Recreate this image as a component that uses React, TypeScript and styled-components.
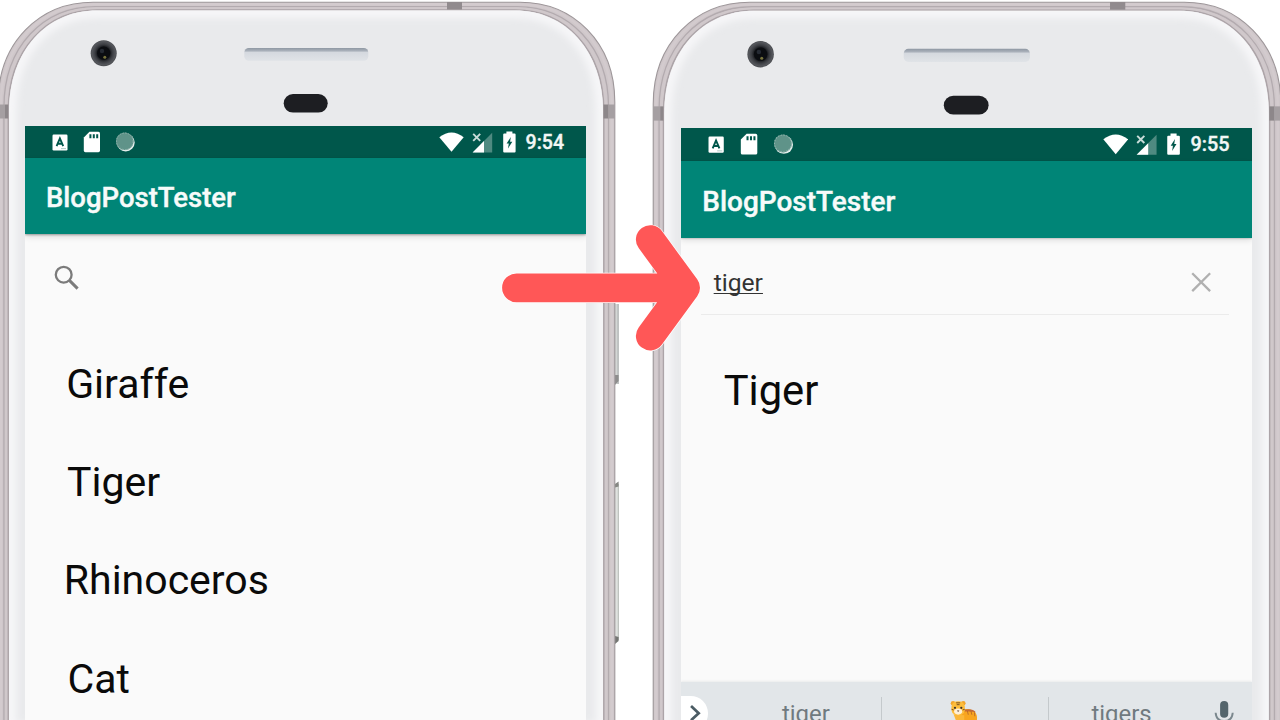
import React from 'react';
import styled, { createGlobalStyle } from 'styled-components';

const GlobalStyle = createGlobalStyle`
  *, *::before, *::after { box-sizing: border-box; }
  html, body { margin: 0; padding: 0; background: #ffffff; overflow: hidden; }
  body { font-family: Roboto, "Liberation Sans", sans-serif; }
`;

const Page = styled.main`
  position: relative;
  width: 1280px;
  height: 720px;
  overflow: hidden;
  background: #ffffff;
`;

const Stage = styled.div`
  display: flex;
  align-items: flex-start;
  gap: 29.4px;
  width: 1300px;
  margin-left: -4px;
`;

const Phone = styled.section<{ $scale: number }>`
  position: relative;
  flex: none;
  width: 626px;
  height: 720px;
  padding: 126px 36px 0 29px;
  zoom: ${(p) => p.$scale};
`;

const DeviceArt = styled.svg`
  position: absolute;
  top: 0;
  left: 0;
  width: 626px;
  height: 720px;
`;

const Screen = styled.div`
  position: relative;
  display: flex;
  flex-direction: column;
  height: 594px;
  background: #fafafa;
  overflow: hidden;
`;

const StatusBar = styled.div`
  flex: none;
  display: flex;
  align-items: center;
  justify-content: space-between;
  height: 32px;
  padding: 0 22px 0 26.7px;
  background: #00574b;
  color: #f2f7f6;
`;

const StatusGroup = styled.div<{ $gap: number }>`
  display: flex;
  align-items: center;
  gap: ${(p) => p.$gap}px;
`;

const Glyph = styled.svg<{ $w: number; $h: number }>`
  display: block;
  flex: none;
  width: ${(p) => p.$w}px;
  height: ${(p) => p.$h}px;
`;

const Clock = styled.span`
  font-size: 19.5px;
  font-weight: 500;
  line-height: 32px;
  padding-top: 1.6px;
  margin-left: 1px;
  -webkit-text-stroke: 0.35px #f2f7f6;
`;

const AppBar = styled.header`
  flex: none;
  position: relative;
  display: flex;
  align-items: center;
  height: 76.3px;
  padding: 4px 20px 0 21px;
  background: #008577;
  box-shadow: 0 1px 2px rgba(0, 0, 0, 0.32), 0 3px 6px rgba(0, 0, 0, 0.12);
`;

const AppTitle = styled.h1`
  margin: 0;
  font-size: 27.5px;
  font-weight: 500;
  line-height: 1;
  color: #f7fbfa;
  -webkit-text-stroke: 0.4px #f7fbfa;
`;

const SearchBar = styled.div<{ $active: boolean }>`
  flex: none;
  display: flex;
  align-items: center;
  justify-content: space-between;
  height: 75px;
  margin: 0 22.5px 0 19.7px;
  padding: ${(p) => (p.$active ? '12px 17px 0 12.5px' : '14px 0 0 9.5px')};
  border-bottom: 1px solid ${(p) => (p.$active ? '#ebebeb' : 'transparent')};
`;

const Query = styled.span`
  padding-top: 2px;
  font-size: 24.2px;
  line-height: 28px;
  color: #333333;
  text-decoration: underline;
  text-decoration-thickness: 1px;
  text-underline-offset: 2px;
  text-decoration-skip-ink: none;
`;

const AnimalList = styled.ul`
  flex: 1;
  min-height: 0;
  margin: 0;
  padding: 25.6px 0 0 36px;
  list-style: none;
  overflow: hidden;
`;

const Animal = styled.li<{ $indent: number }>`
  height: 98.3px;
  padding-left: ${(p) => p.$indent}px;
  font-size: 41px;
  line-height: 98.3px;
  color: #0a0a0a;
  white-space: nowrap;
`;

const Keyboard = styled.div`
  flex: none;
  display: grid;
  grid-template-columns: 49px 147.5px 164px 145px 55.5px;
  height: 50px;
  background: #e2e6e9;
  box-shadow: 0 -1px 2px rgba(120, 130, 135, 0.12);
`;

const KeyCell = styled.div`
  position: relative;
  display: flex;
  align-items: center;
  justify-content: center;
  height: 64px;
  font-size: 23.5px;
  color: #707a7f;

  & + &::before {
    content: '';
    position: absolute;
    left: 0;
    top: 15px;
    bottom: 0;
    width: 1px;
    background: #c4c9cc;
  }
`;

const ExpandKey = styled.div`
  display: flex;
  align-items: center;
  justify-content: center;
  width: 27px;
  height: 34px;
  margin-top: 14px;
  border-radius: 0 17px 17px 0;
  background: #ffffff;
`;

const MicKey = styled.div`
  display: flex;
  justify-content: center;
  padding: 17.5px 0 0 2px;
`;

const ArrowOverlay = styled.svg`
  position: absolute;
  left: 496px;
  top: 220px;
  width: 210px;
  height: 136px;
`;

/* Outline of the handset; t = 0 is the metal edge, t = 1 the edge of the glass. */
function outline(t: number): string {
  const mix = (a: number, b: number) => a + (b - a) * t;
  const m = (x: number) => mix(613, 612) - x;
  const right = mix(614.8, 603);
  const top = mix(2.2, 10.5);
  const bend = mix(520, 515);
  const c1 = mix(573, 565);
  const c2y = mix(42, 50);
  const sideY = mix(102, 112);
  return (
    `M${m(right)} 730V${sideY}C${m(right)} ${c2y} ${m(c1)} ${top} ${m(bend)} ${top}` +
    `H${bend}C${c1} ${top} ${right} ${c2y} ${right} ${sideY}V730Z`
  );
}

function Handset({ id }: { id: string }) {
  return (
    <DeviceArt viewBox="-4 0 626 720" aria-hidden="true">
      <defs>
        <clipPath id={`${id}-glass`}>
          <path d={outline(1)} />
        </clipPath>
        <filter id={`${id}-soft`} x="-10%" y="-10%" width="120%" height="120%">
          <feGaussianBlur stdDeviation="3.5" />
        </filter>
        <radialGradient id={`${id}-lens`}>
          <stop offset="0" stopColor="#0c0e12" />
          <stop offset="0.5" stopColor="#1b1d21" />
          <stop offset="0.68" stopColor="#3c3e43" />
          <stop offset="0.9" stopColor="#55575c" />
          <stop offset="1" stopColor="#4a4c50" />
        </radialGradient>
        <linearGradient id={`${id}-ear`} x1="0" y1="0" x2="0" y2="1">
          <stop offset="0" stopColor="#8f98a3" />
          <stop offset="0.22" stopColor="#a9b0ba" />
          <stop offset="0.35" stopColor="#d5d9df" />
          <stop offset="1" stopColor="#e0e3e7" />
        </linearGradient>
      </defs>

      <g>
        <rect x="614" y="304" width="4.5" height="80" fill="#d3d6d5" />
        <rect x="617.6" y="304" width="1" height="80" fill="#a5a8a7" />
        <path d="M615 375h3.6v6l-3.6 4z" fill="#8d8d8d" />
        <rect x="614" y="484" width="4.5" height="156" fill="#dfe2df" />
        <rect x="617.8" y="484" width="1" height="156" fill="#b3b8b3" />
        <path d="M615 484l3.6-2.5v5l-3.6 1z" fill="#858783" />
        <path d="M615 636l3.6 1v4l-3.6 3z" fill="#747673" />
      </g>

      <path d={outline(0)} fill="#cfc7ca" stroke="#9d9699" strokeWidth="1.1" />
      <path d={outline(0.25)} fill="none" stroke="#d3cbce" strokeWidth="2.4" />
      <path d={outline(0.53)} fill="none" stroke="#b3abaf" strokeWidth="1.3" />
      <path d={outline(0.74)} fill="none" stroke="#d0c8cb" strokeWidth="2" />
      <path d={outline(0.93)} fill="none" stroke="#aca4a8" strokeWidth="1.4" />

      <rect x="447" y="2" width="15" height="7.5" fill="#918b8e" />
      <rect x="603.5" y="104.5" width="5" height="14" fill="#8d878a" />
      <rect x="608.5" y="104.5" width="6.3" height="14" fill="#a59fa2" />
      <rect x="-2" y="104.5" width="7" height="14" fill="#a59fa2" />
      <rect x="5" y="104.5" width="3.2" height="14" fill="#8d878a" />

      <path d={outline(1)} fill="#e9eaec" />
      <g clipPath={`url(#${id}-glass)`}>
        <path
          d={outline(1)}
          fill="none"
          stroke="#f6f6f8"
          strokeWidth="15"
          filter={`url(#${id}-soft)`}
        />
      </g>

      <circle cx="103.7" cy="53.2" r="13" fill={`url(#${id}-lens)`} />
      <circle cx="103.7" cy="53.2" r="6.6" fill="#0b0d11" />
      <circle cx="102" cy="51" r="2.2" fill="#252a33" />
      <circle cx="104.8" cy="57.3" r="1.5" fill="#77733c" />

      <rect x="244.3" y="48" width="124" height="12.8" rx="4.5" fill={`url(#${id}-ear)`} />
      <rect x="283.7" y="94" width="44" height="18.6" rx="9.3" fill="#1d1e22" />
    </DeviceArt>
  );
}

function StatusIcons({ time }: { time: string }) {
  return (
    <StatusBar>
      <StatusGroup $gap={15.2}>
        <Glyph $w={16} $h={17} viewBox="0 0 16 17">
          <rect x="0.5" y="0.5" width="15" height="16" rx="1.2" fill="#fff" />
          <path
            d="M4.6 12.2L7.9 4.4L11.2 12.2M5.6 9.8h4.6"
            fill="none"
            stroke="#00574b"
            strokeWidth="1.9"
          />
          <path d="M9 14.6h5" stroke="#a9c6c1" strokeWidth="0.9" />
        </Glyph>
        <Glyph $w={18} $h={22} viewBox="0 0 18 22">
          <path
            d="M6.5 0.8H15.4Q17 0.8 17 2.4V19.6Q17 21.2 15.4 21.2H2.4Q0.8 21.2 0.8 19.6V6.5Z"
            fill="#fff"
          />
          <path d="M7.4 3.2v4M10.8 3.2v4M14.2 3.2v4" stroke="#00574b" strokeWidth="2" />
        </Glyph>
        <Glyph $w={20} $h={20} viewBox="0 0 20 20">
          <circle cx="9.7" cy="10.5" r="9" fill="#e4edeb" />
          <circle cx="8.8" cy="9.3" r="8.8" fill="#5f9389" />
          <circle
            cx="8.8"
            cy="9.3"
            r="8.3"
            fill="none"
            stroke="#8fb3ac"
            strokeWidth="1"
            strokeDasharray="1.6 1.2"
          />
        </Glyph>
      </StatusGroup>
      <StatusGroup $gap={7.8}>
        <Glyph $w={25} $h={20} viewBox="0 0 25 20">
          <path d="M0.3 5.2Q12.5 -4.4 24.7 5.2L12.5 19.8Z" fill="#fff" />
        </Glyph>
        <Glyph $w={21} $h={21} viewBox="0 0 21 21">
          <path d="M20.2 0.8V20.4H0.6Z" fill="#4f8a81" />
          <path d="M12 9V20.4H0.6Z" fill="#fff" />
          <path d="M0 0H9.5V9.5H0Z" fill="#00574b" />
          <path d="M1.2 1.8l7 7M8.2 1.8l-7 7" stroke="#c9dcd9" strokeWidth="1.9" />
        </Glyph>
        <Glyph $w={16} $h={22} viewBox="0 0 16 22">
          <path
            d="M5.4 0.6h6v2h2.2q1 0 1 1V20.4q0 1-1 1H3.2q-1 0-1-1V3.6q0-1 1-1H5.4Z"
            fill="#fff"
          />
          <path d="M9.8 6L5.6 12.6H7.8L7 17.6L11.3 10.7H9.1Z" fill="#00574b" />
        </Glyph>
        <Clock>{time}</Clock>
      </StatusGroup>
    </StatusBar>
  );
}

function SearchIcon() {
  return (
    <Glyph $w={26} $h={26} viewBox="0 0 26 26">
      <circle cx="9.7" cy="9.7" r="7.9" fill="none" stroke="#7b7b7b" strokeWidth="2.3" />
      <path d="M15.4 15.4L23.6 23.6" fill="none" stroke="#7b7b7b" strokeWidth="3" />
    </Glyph>
  );
}

function ClearIcon() {
  return (
    <Glyph $w={20} $h={20} viewBox="0 0 20 20">
      <path d="M1.2 1.2L18.8 18.8M18.8 1.2L1.2 18.8" stroke="#b0b0b0" strokeWidth="2.3" />
    </Glyph>
  );
}

function TigerEmoji() {
  return (
    <Glyph $w={28} $h={28} viewBox="0 0 28 28">
      <path d="M10 10Q18 7.5 23 10.5Q27 13 26.5 19V28H9Z" fill="#f8a51f" />
      <path d="M14 9.6Q22 7.8 25.5 12Q20 10.8 14 11.4Z" fill="#c56a35" />
      <path d="M17 10.5l1 4M20.5 10.5l1 4M24 12l0.4 4" stroke="#b8692a" strokeWidth="0.9" />
      <path d="M3.5 14Q5 18 9 28H14V15Z" fill="#fbb73a" />
      <circle cx="3" cy="3.2" r="2.3" fill="#f2a52b" />
      <circle cx="13" cy="3.2" r="2.3" fill="#f2a52b" />
      <path
        d="M1.5 5.8Q2.6 1.2 8 1.2Q13.4 1.2 14.5 5.8Q16 14.8 8 15.2Q0 14.8 1.5 5.8Z"
        fill="#fdbd3c"
      />
      <path d="M4.4 9.6Q8 7 11.6 9.6Q13.4 13.8 8 14.4Q2.6 13.8 4.4 9.6Z" fill="#fff0d8" />
      <path d="M6 2.8h4M6.6 4.6h2.8M1.6 9.2l2 .6M14.4 9.2l-2 .6" stroke="#6d4622" strokeWidth="0.9" />
      <circle cx="4.9" cy="7.7" r="1.1" fill="#3b3530" />
      <circle cx="11.1" cy="7.7" r="1.1" fill="#3b3530" />
      <path d="M6.8 10.2h2.4L8 11.8Z" fill="#5b4237" />
    </Glyph>
  );
}

function KeyboardStrip() {
  return (
    <Keyboard>
      <ExpandKey>
        <Glyph $w={14} $h={18} viewBox="0 0 14 18">
          <path d="M3 2L10.5 9L3 16" fill="none" stroke="#4b5c64" strokeWidth="2.7" />
        </Glyph>
      </ExpandKey>
      <KeyCell>tiger</KeyCell>
      <KeyCell>
        <TigerEmoji />
      </KeyCell>
      <KeyCell>tigers</KeyCell>
      <MicKey>
        <Glyph $w={20} $h={28} viewBox="0 0 20 28">
          <rect x="6" y="1" width="8" height="16.5" rx="4" fill="#54656c" />
          <path d="M1.6 12.5Q2.2 20.6 10 20.6Q17.8 20.6 18.4 12.5" fill="none" stroke="#7a878d" strokeWidth="1.9" />
          <path d="M10 20.6V27" stroke="#54656c" strokeWidth="2.4" />
        </Glyph>
      </MicKey>
    </Keyboard>
  );
}

interface AnimalItem {
  name: string;
  indent: number;
}

interface PhoneViewProps {
  id: string;
  scale: number;
  time: string;
  query?: string;
  animals: AnimalItem[];
}

function PhoneView({ id, scale, time, query, animals }: PhoneViewProps) {
  return (
    <Phone $scale={scale}>
      <Handset id={id} />
      <Screen>
        <StatusIcons time={time} />
        <AppBar>
          <AppTitle>BlogPostTester</AppTitle>
        </AppBar>
        <SearchBar $active={Boolean(query)}>
          {query ? (
            <>
              <Query>{query}</Query>
              <ClearIcon />
            </>
          ) : (
            <SearchIcon />
          )}
        </SearchBar>
        <AnimalList>
          {animals.map((a) => (
            <Animal key={a.name} $indent={a.indent}>
              {a.name}
            </Animal>
          ))}
        </AnimalList>
        {query && <KeyboardStrip />}
      </Screen>
    </Phone>
  );
}

const allAnimals: AnimalItem[] = [
  { name: 'Giraffe', indent: 5.2 },
  { name: 'Tiger', indent: 6 },
  { name: 'Rhinoceros', indent: 2.8 },
  { name: 'Cat', indent: 6.5 },
];

const foundAnimals: AnimalItem[] = [{ name: 'Tiger', indent: 6 }];

export default function App() {
  return (
    <Page>
      <GlobalStyle />
      <Stage>
        <PhoneView id="before" scale={1} time="9:54" animals={allAnimals} />
        <PhoneView id="after" scale={1.0178} time="9:55" query="tiger" animals={foundAnimals} />
      </Stage>
      <ArrowOverlay viewBox="496 220 210 136" aria-hidden="true">
        <g fill="none" strokeLinecap="round" strokeLinejoin="round">
          <path
            d="M516.5 287.8H684M650.3 239.6L685.6 287.8L650.3 336"
            stroke="#ffffff"
            strokeWidth="30.2"
          />
          <path
            d="M516.5 287.8H684M650.3 239.6L685.6 287.8L650.3 336"
            stroke="#ff5757"
            strokeWidth="28.8"
          />
        </g>
      </ArrowOverlay>
    </Page>
  );
}
